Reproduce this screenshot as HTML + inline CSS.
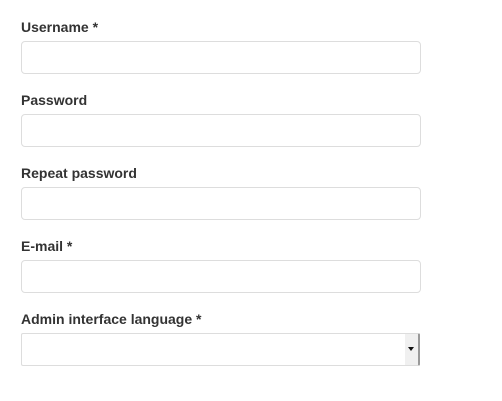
<!DOCTYPE html>
<html><head><style>
body{margin:0;background:#fff;font-family:"Liberation Sans",sans-serif;color:#333}
.g{position:absolute;left:21px;width:400px}
label{position:absolute;left:0;top:1px;font-size:14px;font-weight:bold;line-height:17px}
.i{position:absolute;left:0;top:23px;width:398px;height:31px;border:1px solid #ddd;border-radius:4px;background:#fff}
.s{position:absolute;left:0;top:23px;width:396px;height:31px;border:1px solid #ddd;border-right:2px solid #999;border-radius:2px;background:#fff}
.b{position:absolute;right:0;top:0;width:13px;height:31px;background:#f0f0f0}
.b:after{content:"";position:absolute;left:3px;top:13px;border-left:3px solid transparent;border-right:3px solid transparent;border-top:4px solid #111}
</style></head><body>
<div class="g" style="top:18px"><label>Username *</label><div class="i"></div></div>
<div class="g" style="top:91px"><label>Password</label><div class="i"></div></div>
<div class="g" style="top:164px"><label>Repeat password</label><div class="i"></div></div>
<div class="g" style="top:237px"><label>E-mail *</label><div class="i"></div></div>
<div class="g" style="top:310px"><label>Admin interface language *</label><div class="s"><div class="b"></div></div></div>
</body></html>
